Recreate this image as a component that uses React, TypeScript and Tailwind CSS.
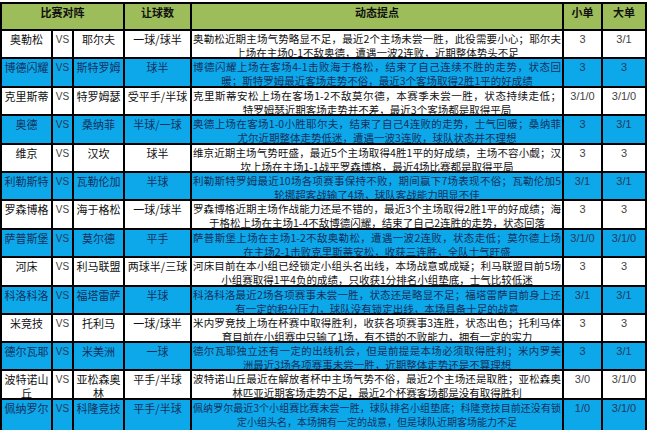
const rows = [
  { a: "奥勒松", b: "耶尔夫", h: "一球/球半", l1: "奥勒松近期主场气势略显不足，最近2个主场未尝一胜，此役需要小心；耶尔夫", l2: "上场在主场0-1不敌奥德，遭遇一波2连败，近期整体势头不足", s: "3", d: "3/1" },
  { a: "博德闪耀", b: "斯特罗姆", h: "球半", l1: "博德闪耀上场在客场4-1击败海于格松，结束了自己连续不胜的走势，状态回", l2: "暖；斯特罗姆最近客场走势不俗，最近3个客场取得2胜1平的好成绩", s: "3", d: "3" },
  { a: "克里斯蒂", b: "特罗姆瑟", h: "受平手/半球", l1: "克里斯蒂安松上场在客场1-2不敌莫尔德，本赛季未尝一胜，状态持续走低；", l2: "特罗姆瑟近期客场走势并不差，最近3个客场都是取得平局", s: "3/1/0", d: "3/1/0" },
  { a: "奥德", b: "桑纳菲", h: "半球/一球", l1: "奥德上场在客场1-0小胜耶尔夫，结束了自己4连败的走势，士气回暖；桑纳菲", l2: "尤尔近期整体走势低迷，遭遇一波3连败，球队状态并不理想", s: "3", d: "3/1" },
  { a: "维京", b: "汉坎", h: "球半", l1: "维京近期主场气势旺盛，最近5个主场取得4胜1平的好成绩，主场不容小觑；汉", l2: "坎上场在主场1-1战平罗森博格，最近4场比赛都是取得平局", s: "3", d: "3" },
  { a: "利勒斯特", b: "瓦勒伦加", h: "半球", l1: "利勒斯特罗姆最近10场各项赛事保持不败，期间赢下7场表现不俗；瓦勒伦加5", l2: "轮挪超客战输了4场，球队客战能力明显不佳", s: "3/1", d: "3/1" },
  { a: "罗森博格", b: "海于格松", h: "一球/球半", l1: "罗森博格近期主场作战能力还是不错的，最近3个主场取得2胜1平的好成绩；海", l2: "于格松上场在主场1-4不敌博德闪耀，结束了自己2连胜的走势，状态回落", s: "3", d: "3" },
  { a: "萨普斯堡", b: "莫尔德", h: "平手", l1: "萨普斯堡上场在主场1-2不敌奥勒松，遭遇一波2连败，状态走低；莫尔德上场", l2: "在主场2-1击败克里斯蒂安松，收获三连胜，全队士气旺盛", s: "3/1/0", d: "3/1/0" },
  { a: "河床", b: "利马联盟", h: "两球半/三球", l1: "河床目前在本小组已经锁定小组头名出线，本场战意或成疑；利马联盟目前5场", l2: "小组赛取得1平4负的成绩，只收获1分排名小组垫底，士气比较低迷", s: "3", d: "3" },
  { a: "科洛科洛", b: "福塔雷萨", h: "半球", l1: "科洛科洛最近2场各项赛事未尝一胜，状态还是略显不足；福塔雷萨目前身上还", l2: "有一定的积分压力，球队没有锁定出线，本场具备十足的战意", s: "3/1", d: "3/1" },
  { a: "米竞技", b: "托利马", h: "一球/球半", l1: "米内罗竞技上场在杯赛中取得胜利，收获各项赛事3连胜，状态出色；托利马体", l2: "育目前在小组赛中只输了1场，有不错的不败能力，拥有一定的实力", s: "3", d: "3" },
  { a: "德尔瓦耶", b: "米美洲", h: "一球", l1: "德尔瓦耶独立还有一定的出线机会，但是前提是本场必须取得胜利；米内罗美", l2: "洲最近3场各项赛事未尝一胜，近期整体走势还是不算理想", s: "3", d: "3/1" },
  { a: "波特诺山丘", b: "亚松森奥林", h: "平手/半球", l1: "波特诺山丘最近在解放者杯中主场气势不俗，最近2个主场还是取胜；亚松森奥", l2: "林匹亚近期客场走势不足，最近2个杯赛客场都是没有取得胜利", s: "3/0", d: "3/1/0" },
  { a: "佩纳罗尔", b: "科隆竞技", h: "平手/半球", l1: "佩纳罗尔最近3个小组赛比赛未尝一胜，球队排名小组垫底；科隆竞技目前还没有锁", l2: "定小组头名，本场拥有一定的战意，但是球队近期客场能力不足", s: "1/0", d: "3/1/0", tight: true },
];

export default function App() {
  return (
    <div className="w-[650px] h-[430px] overflow-hidden bg-white font-['Noto_Sans_CJK_SC',sans-serif]">
      <div className="mt-[2px] w-[647px] grid grid-cols-[49px_19px_49px_65px_370px_37px_42px] grid-rows-[25px_26px_27px_26px_27px_26px_26px_27px_26px_27px_26px_26px_26px_27px_30px] gap-[2px] bg-black px-[2px] pt-[2px]">
        {/* header */}
        <div className="col-span-3 bg-[#9dbd5a] text-center text-[11px] leading-[14px] pt-[1px] font-bold text-[#111]">比赛对阵</div>
        <div className="bg-[#9dbd5a] text-center text-[11px] leading-[14px] pt-[1px] font-bold text-[#111]">让球数</div>
        <div className="bg-[#9dbd5a] text-center text-[11px] leading-[14px] pt-[1px] font-bold text-[#111]">动态提点</div>
        <div className="bg-[#9dbd5a] text-center text-[11px] leading-[14px] pt-[1px] font-bold text-[#111]">小单</div>
        <div className="bg-[#9dbd5a] text-center text-[11px] leading-[14px] pt-[1px] font-bold text-[#111]">大单</div>

        {rows.map((r, i) => {
          const blue = i % 2 === 1;
          const bg = blue ? "bg-[#0ca8ea]" : "bg-white";
          const ink = blue ? "text-[#16305c]" : "text-[#111]";
          const soft = blue ? "text-[#243a5c]" : "text-[#444]";
          const cell = `${bg} ${ink} text-center text-[11px] leading-[14px] pt-[1px]`;
          const num = `${bg} ${soft} text-center text-[11px] leading-[14px] pt-[1px] font-['Liberation_Sans',sans-serif]`;
          return [
            <div key={`a${i}`} className={cell}>{r.a}</div>,
            <div key={`v${i}`} className={`${bg} ${soft} text-center text-[10px] leading-[14px] pt-[1px]`}>
              <span className="font-['Liberation_Sans',sans-serif]">VS</span>
            </div>,
            <div key={`b${i}`} className={cell}>{r.b}</div>,
            <div key={`h${i}`} className={cell}>{r.h}</div>,
            <div key={`d${i}`} className={`${bg} ${ink} px-[1px] pt-[1px] leading-[14px] whitespace-nowrap ${r.tight ? "text-[10px]" : "text-[10.5px]"}`}>
              <div className="text-justify [text-align-last:justify]">{r.l1}</div>
              <div className="text-center">{r.l2}</div>
            </div>,
            <div key={`s${i}`} className={num}>{r.s}</div>,
            <div key={`g${i}`} className={num}>{r.d}</div>,
          ];
        })}
      </div>
    </div>
  );
}
